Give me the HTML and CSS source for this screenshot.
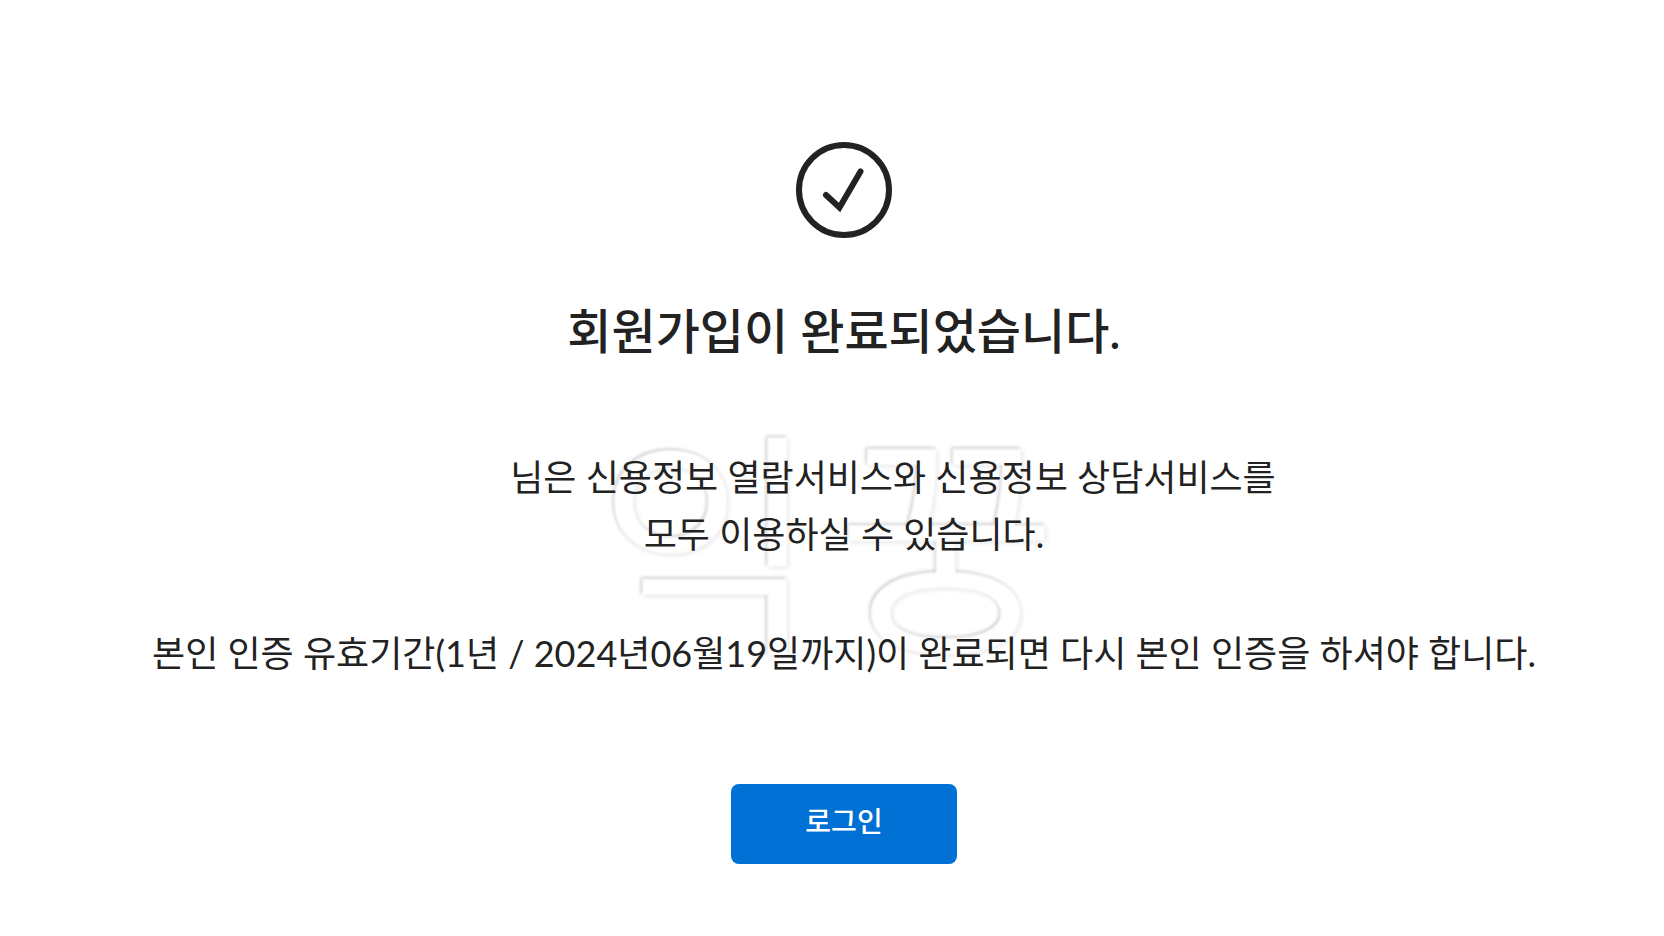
FILE: index.html
```html
<!DOCTYPE html>
<html lang="ko">
<head>
  <meta charset="UTF-8">
  <meta name="viewport" content="width=device-width, initial-scale=1">
  <title>회원가입 완료</title>
  <link rel="stylesheet" href="styles.css">
</head>
<body>

  <main class="container">
    <svg class="check-icon" viewBox="0 0 96 96" fill="none" aria-hidden="true">
      <circle cx="48" cy="48" r="45" stroke="#222" stroke-width="6"/>
      <path d="M30 53 L43.500 65.500 L64.500 29.500" stroke="#222" stroke-width="6" stroke-linecap="round" stroke-linejoin="miter"/>
    </svg>

    <h1>회원가입이 완료되었습니다.</h1>

    <div class="message">
      <div class="watermark" aria-hidden="true"><span>익</span><span>꿍</span></div>
      <p><span class="user-name"></span>님은 신용정보 열람서비스와 신용정보 상담서비스를<br>모두 이용하실 수 있습니다.</p>
      <p>본인 인증 유효기간(1년 / 2024년06월19일까지)이 완료되면 다시 본인 인증을 하셔야 합니다.</p>
    </div>

    <button type="button" class="login-button">로그인</button>
  </main>

</body>
</html>
```

FILE: styles.css
```css
* {
  box-sizing: border-box;
}

body {
  margin: 0;
  background: #fff;
  color: #222;
  font-family: Lato, "Noto Sans CJK KR", sans-serif;
}

.container {
  display: flex;
  flex-direction: column;
  align-items: center;
  padding: 142px 0 72px 24px;
  text-align: center;
}

.check-icon {
  width: 96px;
  height: 96px;
}

h1 {
  margin: 63px 0 88px;
  font-size: 48px;
  font-weight: 500;
  line-height: 60px;
}

.message {
  position: relative;
  font-size: 36px;
  line-height: 57px;
}

.message p {
  position: relative;
  margin: 0 0 62px;
}

/* keeps room for the member's name */
.user-name {
  display: inline-block;
  min-width: 98px;
}

.watermark {
  position: absolute;
  top: -26px;
  left: 0;
  right: 34px;
  display: flex;
  justify-content: center;
  gap: 18px;
  color: #fff;
  font-size: 240px;
  line-height: 240px;
  white-space: nowrap;
  text-shadow: -1px -1px 3px rgba(0, 0, 0, 0.3), 2px 2px 4px rgba(0, 0, 0, 0.08);
  filter: blur(1px);
}

.login-button {
  width: 226px;
  height: 80px;
  margin-top: 40px;
  padding: 0 0 8px;
  border: none;
  border-radius: 8px;
  background: #0070d5;
  color: #fff;
  font-family: inherit;
  font-size: 28px;
  font-weight: 500;
  cursor: pointer;
}
```
